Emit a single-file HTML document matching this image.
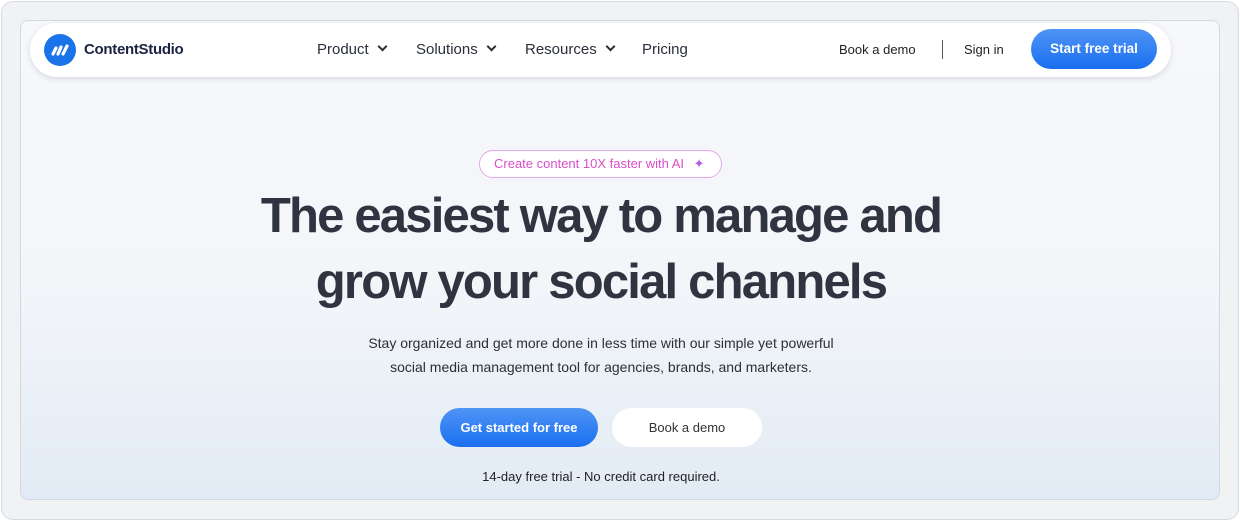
<!DOCTYPE html>
<html><head><style>
*{margin:0;padding:0;box-sizing:border-box}
body{width:1240px;height:521px;background:#fff;font-family:"Liberation Sans",sans-serif;overflow:hidden;position:relative}
.outer{position:absolute;left:1px;top:1px;width:1238px;height:519px;background:#f1f2f4;border:1px solid #d6dae3;border-radius:12px}
.card{position:absolute;left:20px;top:20px;width:1200px;height:480px;border:1.5px solid #d3d8e4;border-radius:8px;background:linear-gradient(180deg,#f7f8fb 0%,#f3f5f9 55%,#e2ebf5 100%);overflow:hidden}
.nav{position:absolute;left:30px;top:23px;width:1141px;height:54px;background:#fff;border-radius:27px;box-shadow:0 2px 6px rgba(40,50,90,.15)}
.logo{position:absolute;left:14px;top:11px;width:32px;height:32px;border-radius:50%;background:#1a73e8}
.brand{position:absolute;left:54px;top:18px;font-size:15px;font-weight:bold;color:#1b2340;letter-spacing:-.3px}
.menu{position:absolute;top:18px;font-size:15px;color:#2a2f3a}
.chev{display:inline-block;width:7px;height:7px;border-right:2px solid #2a2f3a;border-bottom:2px solid #2a2f3a;transform:rotate(45deg);margin-left:10px;position:relative;top:-4px}
.r{position:absolute;top:19px;font-size:13px;color:#222}
.btn{position:absolute;background:linear-gradient(180deg,#4f94f5,#1a6ff0);color:#fff;font-weight:bold;text-align:center}
.h1{position:absolute;left:0;width:1202px;text-align:center;font-size:49px;font-weight:bold;color:#2f3440;letter-spacing:-1.8px}
.p{position:absolute;left:0;width:1202px;text-align:center;font-size:14px;color:#2b2f38}
</style></head><body>
<div class="outer"></div>
<div class="card"></div>
<div class="nav">
 <div class="logo"><svg width="32" height="32"><g stroke="#fff" stroke-width="3.2" stroke-linecap="round"><line x1="9" y1="20" x2="12" y2="14"/><line x1="14" y1="20" x2="17" y2="13"/><line x1="19" y1="20" x2="23" y2="12"/></g></svg></div>
 <div class="brand">ContentStudio</div>
 <div class="menu" style="left:287px">Product<span class="chev"></span></div>
 <div class="menu" style="left:386px">Solutions<span class="chev"></span></div>
 <div class="menu" style="left:495px">Resources<span class="chev"></span></div>
 <div class="menu" style="left:612px">Pricing</div>
 <div class="r" style="left:809px">Book a demo</div>
 <div style="position:absolute;left:912px;top:17px;width:1px;height:19px;background:#555"></div>
 <div class="r" style="left:934px">Sign in</div>
 <div class="btn" style="left:1001px;top:6px;width:126px;height:40px;border-radius:20px;font-size:13.5px;line-height:40px">Start free trial</div>
</div>
<div style="position:absolute;left:479px;top:150px;width:243px;height:28px;border-radius:14px;border:1px solid #e7a8ec;background:#fff;font-size:13px;line-height:26px;padding-left:14px;color:#d94fc8">Create content 10X faster with AI <span style="color:#b45be0;margin-left:6px">✦</span></div>
<div class="h1" style="top:188px">The easiest way to manage and</div>
<div class="h1" style="top:254px">grow your social channels</div>
<div class="p" style="top:335px">Stay organized and get more done in less time with our simple yet powerful</div>
<div class="p" style="top:359px">social media management tool for agencies, brands, and marketers.</div>
<div class="btn" style="left:440px;top:408px;width:158px;height:39px;border-radius:20px;font-size:13px;line-height:39px">Get started for free</div>
<div style="position:absolute;left:612px;top:408px;width:150px;height:39px;border-radius:20px;background:#fff;font-size:13px;line-height:39px;text-align:center;color:#333">Book a demo</div>
<div class="p" style="top:469px;font-size:13px;color:#222">14-day free trial - No credit card required.</div>
</body></html>
